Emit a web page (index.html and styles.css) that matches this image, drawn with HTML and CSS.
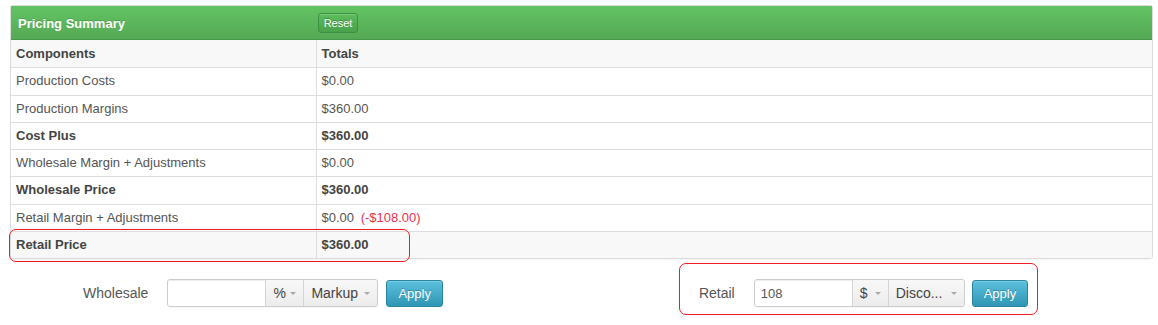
FILE: index.html
```html
<!DOCTYPE html>
<html>
<head>
<meta charset="utf-8">
<link rel="stylesheet" href="styles.css">
</head>
<body>
<div class="panel">
  <table class="summary">
    <colgroup><col class="col1"><col class="col2"></colgroup>
    <thead>
      <tr class="title-row">
        <th class="c1">Pricing Summary</th>
        <th class="c2"><button class="btn-reset">Reset</button></th>
      </tr>
    </thead>
    <tbody>
      <tr class="head grey bold"><td class="c1">Components</td><td class="c2">Totals</td></tr>
      <tr><td class="c1">Production Costs</td><td class="c2">$0.00</td></tr>
      <tr><td class="c1">Production Margins</td><td class="c2">$360.00</td></tr>
      <tr class="bold"><td class="c1">Cost Plus</td><td class="c2">$360.00</td></tr>
      <tr><td class="c1">Wholesale Margin + Adjustments</td><td class="c2">$0.00</td></tr>
      <tr class="bold"><td class="c1">Wholesale Price</td><td class="c2">$360.00</td></tr>
      <tr><td class="c1">Retail Margin + Adjustments</td><td class="c2">$0.00 <span class="neg">(-$108.00)</span></td></tr>
      <tr class="bold grey last"><td class="c1">Retail Price</td><td class="c2">$360.00</td></tr>
    </tbody>
  </table>
  <div class="mark mark-row"></div>
</div>

<div class="forms">
  <div class="group wholesale">
    <span class="label">Wholesale</span>
    <div class="ctrl">
      <input class="txt" type="text" value="">
      <div class="sel sel-unit">%<span class="caret"></span></div>
      <div class="sel sel-type">Markup<span class="caret"></span></div>
    </div>
    <button class="btn-apply">Apply</button>
  </div>
  <div class="group retail">
    <span class="label">Retail</span>
    <div class="ctrl">
      <input class="txt" type="text" value="108">
      <div class="sel sel-unit2">$<span class="caret"></span></div>
      <div class="sel sel-type2">Disco...<span class="caret"></span></div>
    </div>
    <button class="btn-apply">Apply</button>
    <div class="mark mark-retail"></div>
  </div>
</div>
</body>
</html>
```
FILE: styles.css
```css
html, body {
  margin: 0;
  padding: 0;
  background: #fff;
}
html { height: 100%; }
body {
  box-sizing: border-box;
  min-height: 325px;
  padding: 5px 5px 0 10px;
  font-family: "Liberation Sans", Arial, sans-serif;
  font-size: 13px;
  color: #555;
}
.panel {
  position: relative;
  width: 1141px;
  border: 1px solid #dcdcdc;
  border-radius: 3px;
  box-shadow: 0 1px 1px rgba(0,0,0,0.04);
}
.summary {
  width: 100%;
  border-collapse: collapse;
  table-layout: fixed;
}
.summary .col1 { width: 305px; }
.title-row th {
  height: 32px;
  padding: 0;
  background: linear-gradient(#62c462, #55a955);
  border-bottom: 1px solid #47984a;
  color: #fff;
  text-align: left;
  font-size: 13px;
  font-weight: bold;
  text-shadow: 0 -1px 0 rgba(0,0,0,0.15);
}
.title-row th.c1 { padding-left: 7px; padding-top: 1px; }
.title-row th.c2 { padding-left: 2px; }
.btn-reset {
  display: block;
  width: 40px;
  height: 20px;
  padding: 0;
  margin-top: 1px;
  border: 1px solid #3f8f42;
  border-radius: 3px;
  background: linear-gradient(#5bbd5b, #4aa14a);
  box-shadow: inset 0 1px 0 rgba(255,255,255,0.2);
  color: #fff;
  font-family: "Liberation Sans", Arial, sans-serif;
  font-size: 11px;
  text-shadow: 0 -1px 0 rgba(0,0,0,0.25);
}
.summary td {
  padding: 4px 5px 5px;
  line-height: 17.3px;
  border-top: 1px solid #dedede;
  vertical-align: middle;
  white-space: nowrap;
}
.summary td.c1 { border-right: 1px solid #dedede; padding-left: 5px; }
.summary tr.head td { border-top: 0; padding-top: 5px; }
.summary tr.grey td { background: #f8f8f8; }
.summary tr.bold td { font-weight: bold; color: #444; }
.neg { color: #f0304b; margin-left: 3px; }

.mark {
  position: absolute;
  border: 1.5px solid #ee1c25;
  border-radius: 7px;
  pointer-events: none;
}
.mark-row {
  left: -2px;
  top: 223px;
  width: 399px;
  height: 31px;
}

.forms {
  display: flex;
  align-items: center;
  padding: 20px 0 0 73px;
}
.group {
  position: relative;
  display: flex;
  align-items: center;
}
.retail { margin-left: 256px; }
.label {
  margin-right: 19px;
  color: #555;
  font-size: 14px;
}
.ctrl {
  display: flex;
  height: 26px;
  border: 1px solid #ccc;
  border-radius: 3px;
  box-shadow: 0 1px 1px rgba(0,0,0,0.03);
}
.txt {
  box-sizing: border-box;
  width: 97px;
  height: 26px;
  margin: 0;
  padding: 0 6px;
  border: 0;
  border-radius: 3px 0 0 3px;
  background: #fff;
  box-shadow: inset 0 1px 1px rgba(0,0,0,0.075);
  font-family: "Liberation Sans", Arial, sans-serif;
  font-size: 13px;
  color: #555;
  outline: none;
}
.sel {
  position: relative;
  box-sizing: border-box;
  height: 26px;
  line-height: 26px;
  padding-left: 7px;
  border-left: 1px solid #d4d4d4;
  background: linear-gradient(#f8f8f8, #ececec);
  color: #444;
  font-size: 14px;
}
.sel:last-child { border-radius: 0 3px 3px 0; }
.sel-unit { width: 38px; }
.sel-type { width: 74px; }
.sel-unit2 { width: 36px; }
.sel-type2 { width: 76px; }
.caret {
  position: absolute;
  right: 7px;
  top: 12px;
  width: 0;
  height: 0;
  border-left: 3px solid transparent;
  border-right: 3px solid transparent;
  border-top: 3px solid #aaa;
}
.btn-apply {
  box-sizing: border-box;
  height: 27px;
  margin-left: 8px;
  padding: 0 11px;
  border: 1px solid #2a85a0;
  border-radius: 3px;
  background: linear-gradient(#5bc0de, #2f96b4);
  box-shadow: inset 0 1px 0 rgba(255,255,255,0.2);
  color: #fff;
  font-family: "Liberation Sans", Arial, sans-serif;
  font-size: 13px;
  text-shadow: 0 -1px 0 rgba(0,0,0,0.25);
}
.retail .btn-apply { margin-left: 7px; }
.mark-retail {
  left: -20px;
  top: -16px;
  width: 357px;
  height: 50px;
}
```
